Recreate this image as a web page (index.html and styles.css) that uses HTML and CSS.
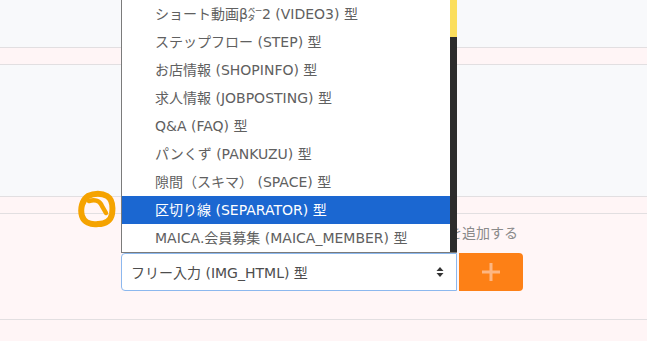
FILE: index.html
```html
<!DOCTYPE html>
<html lang="ja">
<head>
    <meta charset="UTF-8">
    <title>ブロック追加</title>
    <link rel="stylesheet" href="styles.css">
</head>
<body>
<div class="page">
    <div class="row row-light row-top"></div>
    <div class="row row-pink row-thin"></div>
    <div class="row row-light row-mid"></div>
    <div class="row row-pink row-thin"></div>
    <div class="row row-pink row-add">
        <p class="add-caption">ブロックを追加する</p>
        <form class="add-form">
            <div class="select-box">
                <span class="select-text">フリー入力 (IMG_HTML) 型</span>
                <svg class="select-arrows" width="8" height="12" viewBox="0 0 8 12">
                    <path d="M4 1 L7.5 5 H0.5 Z M4 11 L7.5 7 H0.5 Z" fill="#333"/>
                </svg>
            </div>
            <button type="button" class="add-button">
                <svg width="22" height="22" viewBox="0 0 22 22">
                    <path d="M11 2 V20 M2 11 H20" stroke="#fdb682" stroke-width="3"/>
                </svg>
            </button>
        </form>
    </div>
    <div class="row row-pink row-bottom"></div>

    <svg class="marker" width="38" height="38" viewBox="0 0 38 38">
        <path d="M10 6 C16 3 24 3 29 6 C34 9 35 17 34 24 C33 30 28 34 20 34 C12 35 6 32 4 26 C2 19 4 10 10 6 Z"
              fill="none" stroke="#f5a300" stroke-width="6" stroke-linejoin="round"/>
        <path d="M11 11 C17 9 22 11 24 16 L28 23" fill="none" stroke="#f5a300" stroke-width="4.5" stroke-linecap="round"/>
    </svg>

    <div class="dropdown">
        <ul class="options">
            <li>ショート動画β㌼2 (VIDEO3) 型</li>
            <li>ステップフロー (STEP) 型</li>
            <li>お店情報 (SHOPINFO) 型</li>
            <li>求人情報 (JOBPOSTING) 型</li>
            <li>Q&amp;A (FAQ) 型</li>
            <li>パンくず (PANKUZU) 型</li>
            <li>隙間（スキマ） (SPACE) 型</li>
            <li class="selected">区切り線 (SEPARATOR) 型</li>
            <li>MAICA.会員募集 (MAICA_MEMBER) 型</li>
        </ul>
        <div class="scrollbar"><div class="thumb"></div></div>
    </div>
</div>
</body>
</html>
```

FILE: styles.css
```css
body {
    margin: 0;
    font-family: "DejaVu Sans", "Noto Sans CJK JP", sans-serif;
    background-color: #fff6f7;
    overflow: hidden;
}
.page {
    position: relative;
    width: 647px;
    height: 341px;
}
.row {
    border-bottom: 1px solid #e2dfe1;
}
.row-light {
    background-color: #f8f9fb;
}
.row-pink {
    background-color: #fff5f6;
}
.row-top {
    height: 47px;
}
.row-thin {
    height: 16px;
}
.row-mid {
    height: 131px;
}
.row-add {
    height: 105px;
    background-color: #fff6f7;
}
.row-bottom {
    border-bottom: none;
    height: 21px;
}
.add-caption {
    margin: 0;
    padding-top: 9px;
    width: 518px;
    text-align: right;
    font-family: "Noto Sans CJK JP", sans-serif;
    font-size: 14px;
    line-height: 19px;
    color: #8a8a8a;
}
.add-form {
    display: flex;
    margin: 11px 0 0 121px;
}
.select-box {
    box-sizing: border-box;
    width: 336px;
    height: 38px;
    border: 1px solid #8cb8ee;
    border-radius: 4px 0 0 4px;
    background-color: #fff;
    display: flex;
    align-items: center;
    padding: 0 12px 0 9px;
}
.select-text {
    flex: 1;
    font-size: 14px;
    color: #4d4d4d;
}
.add-button {
    width: 64px;
    height: 38px;
    margin-left: 2px;
    border: none;
    border-radius: 0 4px 4px 0;
    background-color: #fd8016;
    display: flex;
    align-items: center;
    justify-content: center;
    padding: 0;
}
.marker {
    position: absolute;
    left: 78px;
    top: 190px;
}
.dropdown {
    position: absolute;
    left: 121px;
    top: -1px;
    width: 336px;
    height: 254px;
    box-sizing: border-box;
    border: 1px solid #7b7b7b;
    border-right: none;
    background-color: #fff;
    display: flex;
}
.options {
    list-style: none;
    margin: 0;
    padding: 0;
    flex: 1;
}
.options li {
    height: 28px;
    line-height: 28px;
    padding-left: 33px;
    font-size: 14px;
    color: #606060;
    white-space: nowrap;
}
.options li.selected {
    background-color: #1b67d1;
    color: #fff;
}
.scrollbar {
    width: 7px;
    background-color: #2c2c2c;
}
.thumb {
    height: 37px;
    background-color: #fbde5c;
}
```
